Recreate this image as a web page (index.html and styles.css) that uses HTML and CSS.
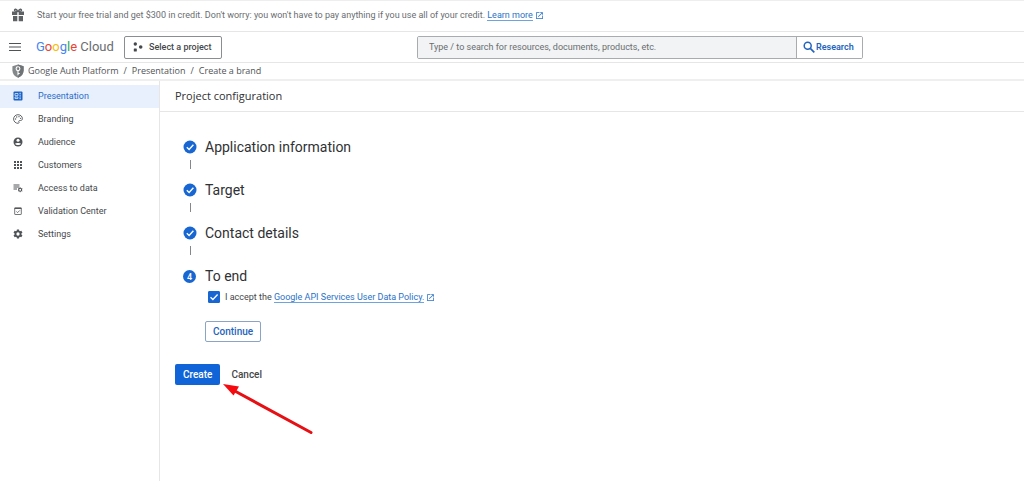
FILE: index.html
```html
<!DOCTYPE html>
<html lang="en">
<head>
<meta charset="utf-8">
<meta name="viewport" content="width=device-width, initial-scale=1">
<title>Project configuration</title>
<link rel="stylesheet" href="styles.css">
</head>
<body>
<div class="promo">
  <svg class="icon gift" viewBox="0 0 14 14" aria-hidden="true"><path d="M1 3.500h5.300V7H1zM7.700 3.500H13V7H7.700zM2 8h4.300v5.200H2zM7.700 8H12v5.200H7.700z" fill="currentColor"/><path d="M6.800 3.500C5.600.6 3.200.8 3.500 2.300c.2 1 1.600 1.200 3.300 1.200zM7.200 3.500C8.400.6 10.800.8 10.500 2.300c-.2 1-1.600 1.200-3.300 1.200z" fill="none" stroke="currentColor" stroke-width="1.300"/></svg>
  <p>Start your free trial and get $300 in credit. Don't worry: you won't have to pay anything if you use all of your credit. <a class="link" href="#">Learn more</a><svg class="ext" viewBox="0 0 24 24" aria-hidden="true"><path d="M19 19H5V5h7V3H3v18h18v-9h-2zM14 3v2h3.600l-9.800 9.800 1.400 1.400L19 6.400V10h2V3z" fill="currentColor"/></svg></p>
</div>
<header class="header">
  <button class="menu" type="button" aria-label="Navigation menu"><svg viewBox="0 0 12 10" aria-hidden="true"><path d="M0 1.500h12M0 5h12M0 8.500h12" stroke="currentColor" stroke-width="1.200"/></svg></button>
  <a class="brand" href="#"><span class="b">G</span><span class="r">o</span><span class="y">o</span><span class="b">g</span><span class="g">l</span><span class="r">e</span> Cloud</a>
  <button class="project" type="button"><svg viewBox="0 0 10 10" aria-hidden="true"><g fill="currentColor"><circle cx="2.300" cy="2" r="1.700"/><circle cx="7.700" cy="5" r="1.800"/><rect x=".8" y="6.500" width="3" height="3" rx=".6"/></g></svg>Select a project</button>
  <form class="search">
    <input type="text" aria-label="Search" placeholder="Type / to search for resources, documents, products, etc.">
    <button type="button"><svg viewBox="0 0 12 12" aria-hidden="true"><circle cx="4.700" cy="4.700" r="3.500" fill="none" stroke="currentColor" stroke-width="1.500"/><path d="M7.300 7.300l4 4" stroke="currentColor" stroke-width="1.700"/></svg>Research</button>
  </form>
</header>
<nav class="crumbs" aria-label="Breadcrumb">
  <svg class="shield" viewBox="0 0 12 14" aria-hidden="true"><path d="M6 .4l5.600 1.900v4.200c0 3.300-2.200 6-5.600 7.200C2.600 12.500.4 9.800.4 6.500V2.300z" fill="#85888b"/><path d="M6 .4l5.600 1.900v4.200c0 3.300-2.200 6-5.600 7.200z" fill="#707376"/><circle cx="6" cy="4.700" r="1.900" fill="none" stroke="#fff" stroke-width="1.100"/><path d="M6 6.500v4.700M6 9.500h1.700" stroke="#fff" stroke-width="1.100"/></svg>
  <a href="#">Google Auth Platform</a><span>/</span><a href="#">Presentation</a><span>/</span><a href="#">Create a brand</a>
</nav>
<div class="layout">
  <nav class="side" aria-label="Sections">
    <a class="item active" href="#"><svg viewBox="0 0 10 10" aria-hidden="true"><rect x=".5" y=".5" width="9" height="9" rx="1" fill="#1a62c4"/><path d="M2 2.500h3v2.200H2zM2 6h3v1.500H2zM6.300 2.300H8M6.300 4.200H8M6.300 6H8M6.300 7.700H8" fill="none" stroke="#d9e8ff" stroke-width=".8"/></svg>Presentation</a>
    <a class="item" href="#"><svg viewBox="0 0 10 10" aria-hidden="true"><path d="M5 .7C2.500.7.6 2.600.6 5S2.500 9.300 5 9.300c1.100 0 1.200-.8.900-1.300-.4-.7 0-1.500.8-1.500h1C8.700 6.500 9.400 5.800 9.400 4.700 9.400 2.400 7.400.7 5 .7z" fill="none" stroke="currentColor" stroke-width=".9"/><g fill="currentColor"><circle cx="2.600" cy="5" r=".65"/><circle cx="3.700" cy="3" r=".65"/><circle cx="6" cy="2.700" r=".65"/><circle cx="7.600" cy="4.300" r=".65"/></g></svg>Branding</a>
    <a class="item" href="#"><svg viewBox="0 0 10 10" aria-hidden="true"><circle cx="5" cy="5" r="4.500" fill="currentColor"/><circle cx="5" cy="3.300" r="1.500" fill="#fff"/><path d="M2 6.800C2.700 5.600 7.300 5.600 8 6.800 7 8.500 3 8.500 2 6.800z" fill="#fff"/></svg>Audience</a>
    <a class="item" href="#"><svg viewBox="0 0 10 10" aria-hidden="true"><path d="M1 2h8M1 5h8M1 8h8" stroke="currentColor" stroke-width="2" stroke-dasharray="2 1"/></svg>Customers</a>
    <a class="item" href="#"><svg viewBox="0 0 10 10" aria-hidden="true"><path d="M.5 2h6M.5 4h6M.5 6h3.500" stroke="currentColor"/><circle cx="7.200" cy="6.800" r="1.500" fill="none" stroke="currentColor" stroke-width="1.100"/><path d="M7.200 4.400v.9M7.200 8.300v.9M5.100 5.600l.8.500M8.500 7.500l.8.500M5.100 8l.8-.5M8.500 6.100l.8-.5" stroke="currentColor" stroke-width=".9"/></svg>Access to data</a>
    <a class="item" href="#"><svg viewBox="0 0 10 10" aria-hidden="true"><rect x="1.700" y="2" width="6.600" height="6.500" rx=".4" fill="none" stroke="currentColor" stroke-width=".8"/><path d="M1.500 2.300h7" stroke="currentColor" stroke-width="1.300"/><path d="M3.400 5.500l1.200 1.100L6.800 4.400" fill="none" stroke="currentColor" stroke-width=".8"/></svg>Validation Center</a>
    <a class="item" href="#"><svg viewBox="1 1 22 22" aria-hidden="true"><path d="M19.400 13a7.500 7.500 0 0 0 0-2l2.100-1.600c.2-.2.300-.4.100-.7l-2-3.400c-.1-.3-.4-.3-.6-.2l-2.500 1a7.300 7.300 0 0 0-1.700-1l-.4-2.700c0-.2-.2-.4-.5-.4h-4c-.2 0-.4.2-.4.400L9.100 5.100c-.6.2-1.200.6-1.700 1l-2.500-1c-.2-.1-.5 0-.6.200l-2 3.400c-.1.300-.1.500.1.700L4.600 11a7.500 7.500 0 0 0 0 2l-2.200 1.600c-.2.200-.2.400-.1.700l2 3.400c.1.300.4.300.6.200l2.500-1c.5.400 1.100.7 1.700 1l.4 2.700c0 .2.200.4.400.4h4c.300 0 .5-.2.500-.4l.4-2.700c.6-.3 1.200-.6 1.700-1l2.500 1c.2.100.5 0 .6-.2l2-3.400c.2-.3.100-.5-.1-.7zM12 15.600a3.600 3.600 0 1 1 0-7.200 3.600 3.600 0 0 1 0 7.200z" fill="currentColor"/></svg>Settings</a>
  </nav>
  <main class="main">
    <h1 class="title">Project configuration</h1>
    <div class="content">
      <ol class="steps">
        <li class="step"><svg class="badge" viewBox="0 0 14 14" aria-hidden="true"><circle cx="7" cy="7" r="6.500"/><path d="M3.800 7.200l2.300 2.200 4.300-4.600"/></svg><h2>Application information</h2></li>
        <li class="step"><svg class="badge" viewBox="0 0 14 14" aria-hidden="true"><circle cx="7" cy="7" r="6.500"/><path d="M3.800 7.200l2.300 2.200 4.300-4.600"/></svg><h2>Target</h2></li>
        <li class="step"><svg class="badge" viewBox="0 0 14 14" aria-hidden="true"><circle cx="7" cy="7" r="6.500"/><path d="M3.800 7.200l2.300 2.200 4.300-4.600"/></svg><h2>Contact details</h2></li>
        <li class="step last"><span class="num">4</span><h2>To end</h2></li>
      </ol>
      <div class="accept">
        <span class="check"><input type="checkbox" id="accept" checked><svg viewBox="0 0 12 12" aria-hidden="true"><path d="M2.500 6.200l2.400 2.300 4.700-5" fill="none" stroke="#fff" stroke-width="1.300"/></svg></span>
        <div><label for="accept">I accept the</label> <a class="link" href="#">Google API Services User Data Policy.</a><svg class="ext" viewBox="0 0 24 24" aria-hidden="true"><path d="M19 19H5V5h7V3H3v18h18v-9h-2zM14 3v2h3.600l-9.800 9.800 1.400 1.400L19 6.400V10h2V3z" fill="currentColor"/></svg></div>
      </div>
      <button class="btn outline" type="button">Continue</button>
      <div class="actions">
        <button class="btn primary" type="button">Create</button>
        <button class="btn text" type="button">Cancel</button>
        <svg class="arrow" viewBox="0 0 92 52" aria-hidden="true"><path d="M10 6l78 42.500" stroke="#e60f14" stroke-width="3" stroke-linecap="round"/><path d="M0 0l16 2.500-5.500 9z" fill="#f50a0f"/></svg>
      </div>
    </div>
  </main>
</div>
</body>
</html>
```
FILE: styles.css
```css
* { box-sizing: border-box; }
body {
  margin: 0;
  min-height: 100vh;
  display: flex;
  flex-direction: column;
  background: #fff;
  color: #45484b;
  font: 9px/14px Roboto, sans-serif;
}
h1, h2, p, ol { margin: 0; padding: 0; font-weight: 400; }
a { color: inherit; text-decoration: none; }
button, input { font: inherit; color: inherit; margin: 0; }
svg { flex: none; }
button { cursor: pointer; }

.promo {
  display: flex;
  align-items: center;
  gap: 12px;
  height: 32px;
  padding: 0 11px 2px;
  border-top: 1px solid #eee;
  border-bottom: 1px solid #e6e6e6;
  color: #6a6d70;
}
.gift { width: 14px; height: 14px; color: #5f6265; }
.link { color: #2a72c8; border-bottom: 1px solid #6fa3e0; }
.ext { width: 9px; height: 9px; margin-left: 2px; vertical-align: -2px; color: #2a72c8; }

.header {
  display: flex;
  align-items: center;
  height: 31px;
  padding: 0 9px;
  border-bottom: 1px solid #e6e6e6;
}
.menu { display: flex; padding: 0; border: 0; background: none; color: #505356; }
.menu svg { width: 12px; height: 10px; }
.brand { margin-left: 15px; width: 75px; font: 13px/20px Roboto, sans-serif; color: #6a6d70; white-space: nowrap; }
.b { color: #4285f4; }
.r { color: #ea4335; }
.y { color: #fbbc04; }
.g { color: #34a853; }
.project {
  display: flex;
  align-items: center;
  gap: 6px;
  height: 23px;
  margin-left: 13px;
  padding: 0 10px 0 8px;
  border: 1px solid #8b8e91;
  border-radius: 2px;
  background: #fff;
  font-weight: 500;
  white-space: nowrap;
}
.project svg { width: 10px; height: 10px; }
.search {
  display: flex;
  flex: 0 1 446px;
  height: 23px;
  margin: 0 152px 0 auto;
  border: 1px solid #a9acaf;
  border-radius: 2px;
  overflow: hidden;
}
.search input { flex: 1; min-width: 0; padding: 0 11px; border: 0; background: #f1f3f4; outline: 0; }
.search input::placeholder { color: #6a6d70; opacity: 1; }
.search button {
  display: flex;
  align-items: center;
  gap: 1px;
  width: 66px;
  padding: 0 6px;
  border: 0;
  border-left: 1px solid #a9acaf;
  background: #fff;
  color: #2464bd;
  font-weight: 600;
}
.search svg { width: 12px; height: 12px; }

.crumbs {
  display: flex;
  align-items: center;
  gap: 5px;
  height: 18px;
  padding: 0 12px;
  border-bottom: 2px solid #efefef;
  font-family: "Open Sans", sans-serif;
  color: #505356;
}
.shield { width: 12px; height: 14px; margin-right: -1px; }

.layout { display: flex; flex: 1; }
.side { flex: none; width: 160px; padding-top: 4px; border-right: 1px solid #e6e6e6; }
.item { display: flex; align-items: center; gap: 15px; height: 23px; padding: 0 0 2px 13px; }
.item svg { width: 10px; height: 10px; color: #505356; }
.item.active { background: #e8f0fe; color: #2a6cc8; }

.main { flex: 1; min-width: 0; }
.title { height: 31px; padding: 0 15px; border-bottom: 1px solid #e6e6e6; font: 11px/29px "Open Sans", sans-serif; color: #303134; }
.content { padding: 25px 15px; }
.steps { list-style: none; padding-left: 8px; }
.step { display: grid; grid-template-columns: 14px 1fr; column-gap: 8px; align-items: center; }
.step::after { content: ""; justify-self: center; width: 1px; height: 9px; margin: 3px 0 11px; background: #85888b; }
.step.last::after { display: none; }
.step h2 { font-size: 14px; line-height: 20px; color: #303134; }
.badge { width: 14px; height: 14px; }
.badge circle { fill: #1766d2; }
.badge path { fill: none; stroke: #fff; stroke-width: 1.4; }
.num { width: 13px; height: 13px; border-radius: 50%; background: #1766d2; color: #fff; line-height: 14px; font-weight: 500; text-align: center; }
.accept { display: flex; align-items: center; gap: 5px; margin: 4px 0 17px 33px; }
.check { display: grid; width: 12px; height: 12px; }
.check > * { grid-area: 1 / 1; width: 12px; height: 12px; }
.check svg { pointer-events: none; visibility: hidden; }
.check input { appearance: none; border: 1px solid #5f6368; border-radius: 1px; }
.check input:checked { background: #1766d2; border-color: #1766d2; }
.check input:checked + svg { visibility: visible; }
.btn { height: 21px; padding: 0 7px; border: 1px solid transparent; border-radius: 2px; font-size: 10px; font-weight: 500; }
.outline { display: block; margin-left: 30px; background: #fff; border-color: #8ba3c7; color: #2464bd; }
.actions { position: relative; display: flex; gap: 3px; margin-top: 22px; }
.primary { background: #1163d8; color: #fff; }
.text { background: none; }
.arrow { position: absolute; left: 48px; top: 20px; width: 92px; height: 52px; }
```
